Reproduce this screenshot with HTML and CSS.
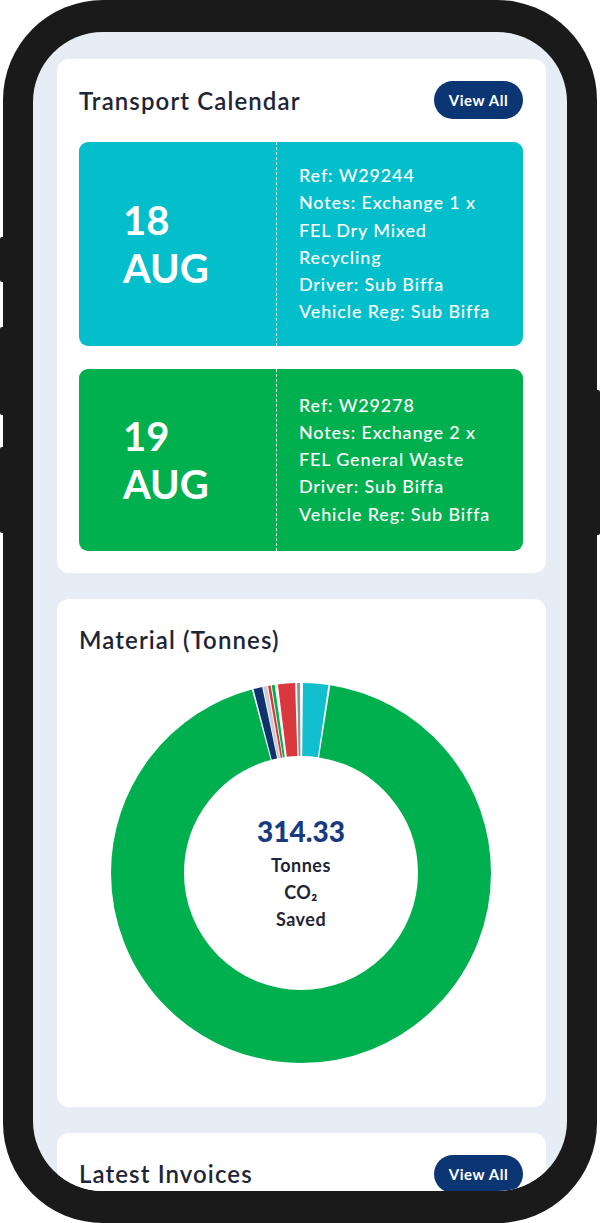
FILE: index.html
```html
<!DOCTYPE html>
<html lang="en">
<head>
  <meta charset="UTF-8">
  <title>Dashboard</title>
  <meta name="viewport" content="width=device-width, initial-scale=1.0">
  <link rel="stylesheet" href="styles.css">
</head>
<body>

<div class="phone">
  <span class="side-btn mute"></span>
  <span class="side-btn vol-up"></span>
  <span class="side-btn vol-down"></span>
  <span class="side-btn power"></span>

  <div class="screen">

    <section class="card">
      <div class="card-head">
        <h2>Transport Calendar</h2>
        <a class="view-all" href="#">View All</a>
      </div>
      <div class="events">
        <div class="event cyan">
          <div class="event-date">18<br>AUG</div>
          <div class="event-info">
            <p>Ref: W29244</p>
            <p>Notes: Exchange 1 x FEL Dry Mixed Recycling</p>
            <p>Driver: Sub Biffa</p>
            <p>Vehicle Reg: Sub Biffa</p>
          </div>
        </div>
        <div class="event green">
          <div class="event-date">19<br>AUG</div>
          <div class="event-info">
            <p>Ref: W29278</p>
            <p>Notes: Exchange 2 x FEL General Waste</p>
            <p>Driver: Sub Biffa</p>
            <p>Vehicle Reg: Sub Biffa</p>
          </div>
        </div>
      </div>
    </section>

    <section class="card">
      <div class="card-head">
        <h2>Material (Tonnes)</h2>
      </div>
      <div class="chart">
        <svg class="donut" width="380" height="380" viewBox="0 0 380 380">
          <g transform="rotate(-90 190 190)" fill="none" stroke-width="73">
            <circle cx="190" cy="190" r="153.5" pathLength="360" stroke="#12bfce" stroke-dasharray="7.7 360" stroke-dashoffset="-0.6"></circle>
            <circle cx="190" cy="190" r="153.5" pathLength="360" stroke="#00b04f" stroke-dasharray="336.1 360" stroke-dashoffset="-8.9"></circle>
            <circle cx="190" cy="190" r="153.5" pathLength="360" stroke="#10336f" stroke-dasharray="2.7 360" stroke-dashoffset="-345.5"></circle>
            <circle cx="190" cy="190" r="153.5" pathLength="360" stroke="#c9cdd3" stroke-dasharray="1.2 360" stroke-dashoffset="-348.5"></circle>
            <circle cx="190" cy="190" r="153.5" pathLength="360" stroke="#d9393c" stroke-dasharray="0.8 360" stroke-dashoffset="-350"></circle>
            <circle cx="190" cy="190" r="153.5" pathLength="360" stroke="#00b04f" stroke-dasharray="0.9 360" stroke-dashoffset="-351.1"></circle>
            <circle cx="190" cy="190" r="153.5" pathLength="360" stroke="#d9393c" stroke-dasharray="5.2 360" stroke-dashoffset="-353"></circle>
            <circle cx="190" cy="190" r="153.5" pathLength="360" stroke="#8e939b" stroke-dasharray="0.9 360" stroke-dashoffset="-358.8"></circle>
          </g>
        </svg>
        <div class="chart-label">
          <strong>314.33</strong>
          <span>Tonnes</span>
          <span>CO₂</span>
          <span>Saved</span>
        </div>
      </div>
    </section>

    <section class="card">
      <div class="card-head">
        <h2>Latest Invoices</h2>
        <a class="view-all" href="#">View All</a>
      </div>
      <div class="invoices"></div>
    </section>

  </div>
</div>

</body>
</html>
```

FILE: styles.css
```css
* {
  box-sizing: border-box;
  margin: 0;
  padding: 0;
}

body {
  font-family: 'Lato', 'Noto Sans', sans-serif;
  background: #fff;
  color: #1e2536;
  width: 600px;
  height: 1223px;
  overflow: hidden;
}

/* phone frame */
.phone {
  position: relative;
  width: 594px;
  height: 1223px;
  margin-left: 3px;
  padding: 32px 30px;
  background: #1a1a1a;
  border-radius: 100px;
}

.side-btn {
  position: absolute;
  width: 5px;
  background: #1a1a1a;
  border-radius: 2px;
}

.mute { left: -3px; top: 237px; height: 45px; }
.vol-up { left: -3px; top: 327px; height: 88px; }
.vol-down { left: -3px; top: 447px; height: 86px; }
.power { right: -3px; top: 390px; height: 145px; }

.screen {
  height: 100%;
  padding: 27px 21px 0 24px;
  background: #e6edf5;
  border-radius: 70px;
  overflow: hidden;
}

/* cards */
.card {
  background: #fff;
  border-radius: 12px;
  padding: 22px 23px 22px 22px;
  margin-bottom: 26px;
}

.card-head {
  display: flex;
  justify-content: space-between;
  align-items: center;
  height: 38px;
}

.card-head h2 {
  font-size: 24px;
  font-weight: 600;
  letter-spacing: 1.1px;
  color: #1e2536;
}

.view-all {
  display: flex;
  align-items: center;
  justify-content: center;
  width: 89px;
  height: 38px;
  border-radius: 19px;
  background: #0c3573;
  color: #fff;
  font-size: 15px;
  font-weight: 700;
  letter-spacing: 0.6px;
  text-decoration: none;
}

/* transport calendar */
.events {
  display: flex;
  flex-direction: column;
  gap: 23px;
  margin-top: 23px;
}

.event {
  display: flex;
  min-height: 182px;
  border-radius: 9px;
  color: #fff;
}

.event.cyan { background: #02bfcb; }
.event.green { background: #00b04f; }

.event-date {
  display: flex;
  align-items: center;
  width: 198px;
  padding-left: 44px;
  border-right: 1px dashed rgba(255, 255, 255, 0.85);
  font-size: 40px;
  font-weight: 700;
  line-height: 48px;
}

.event-info {
  flex: 1;
  display: flex;
  flex-direction: column;
  justify-content: center;
  padding: 20px 24px 20px 22px;
  font-size: 18px;
  font-weight: 500;
  letter-spacing: 0.85px;
  line-height: 27.3px;
}

/* material chart */
.chart {
  display: grid;
  justify-content: center;
  align-items: center;
  margin: 24px 0 22px;
}

.donut,
.chart-label {
  grid-area: 1 / 1;
}

.donut {
  display: block;
}

.chart-label {
  display: flex;
  flex-direction: column;
  align-items: center;
  font-weight: 700;
  font-size: 18px;
  letter-spacing: 0.5px;
  line-height: 27px;
  color: #1e2536;
}

.chart-label strong {
  font-size: 28px;
  letter-spacing: 0;
  line-height: 38px;
  color: #183a80;
  margin-bottom: 2px;
}

.invoices {
  height: 300px;
}
```
